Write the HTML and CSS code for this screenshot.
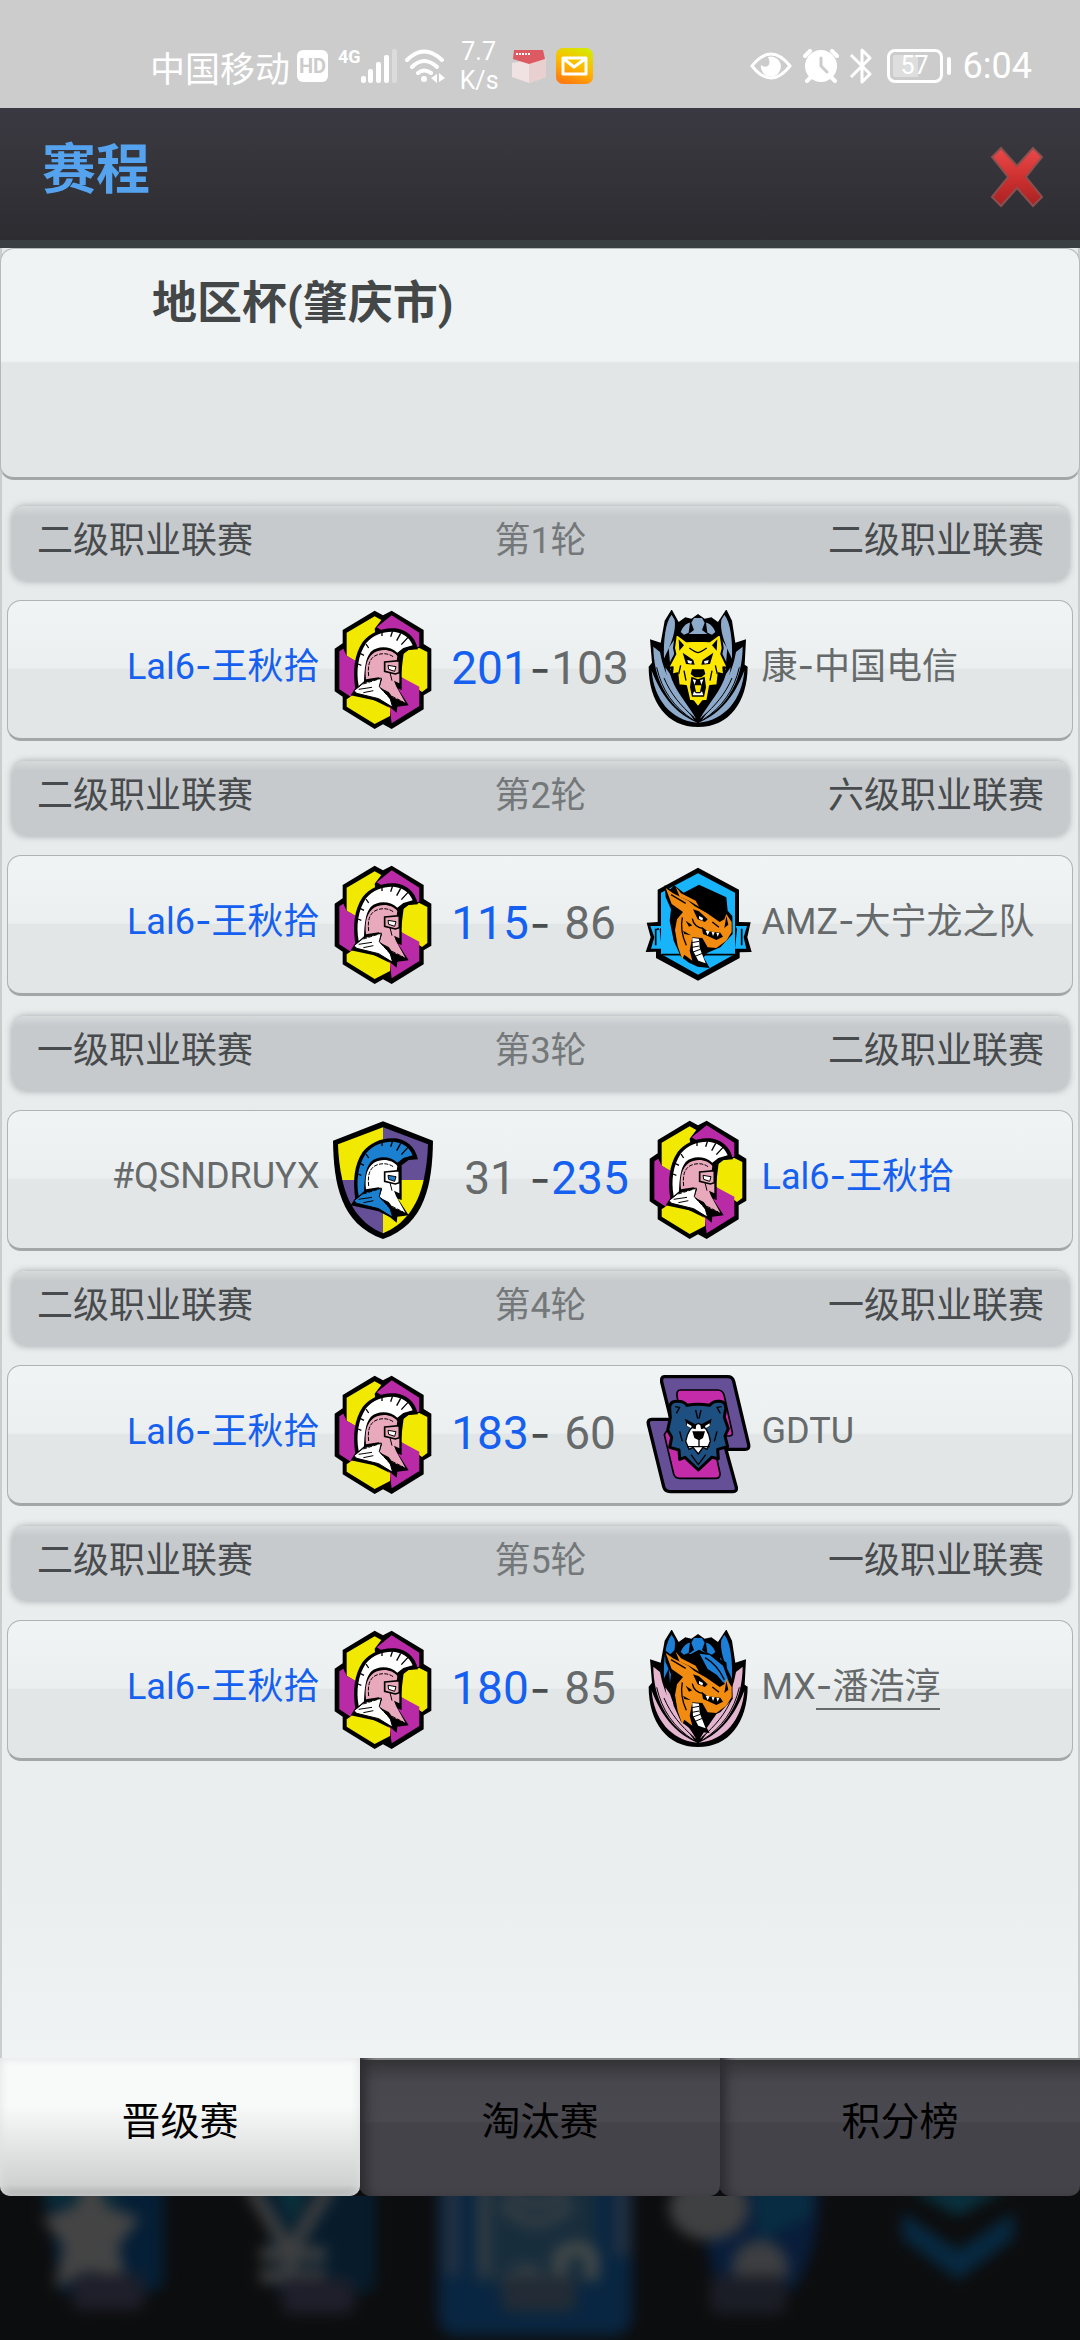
FILE: index.html
```html
<!DOCTYPE html>
<html lang="zh-CN">
<head>
  <meta charset="UTF-8">
  <meta name="viewport" content="width=device-width, initial-scale=1.0">
  <title>赛程</title>
  <link rel="stylesheet" href="styles.css">
</head>
<body>
  <!-- team logos, shared by the match rows -->
  <svg class="defs" aria-hidden="true">
    <symbol id="helmet" viewBox="0 0 324 360">
      <g transform="translate(-1 -24)">
        <path d="M80 262C72 205 76 160 102 120C124 92 160 76 200 79C232 84 258 100 268 142L240 144L219 160V264L208 260L240 310L206 314L204 332L184 316L150 298L66 280L82 256Z" fill="#000"/>
        <path class="crest" d="M90 252C82 205 88 160 112 124C134 98 164 88 194 89C218 92 242 102 252 130L224 138L206 152C184 132 148 130 126 150C110 170 108 200 106 238Z"/>
        <path d="M88 186l10 4M94 154l12 6M112 126l8 12M160 86v16M192 86l-6 18M216 94l-12 22M238 106l-20 22" stroke="#000" stroke-width="4" fill="none"/>
        <path class="mask" d="M112 232C108 192 116 166 136 152C162 138 192 144 206 162L204 176H212V244L196 236L202 252L230 302L192 286L180 270L152 256L160 232L150 226Z"/>
        <path class="mask" d="M168 180L212 176V212L200 216L168 208Z" stroke="#000" stroke-width="5"/>
        <path class="collar" d="M76 266L106 242L158 228L152 254L184 288L192 316L150 290L84 274Z" stroke="#000" stroke-width="3"/>
        <path d="M120 222C116 188 124 168 142 160C160 152 182 154 196 166M104 246l50-16M156 258l30 34M176 276l48 24" stroke="#000" stroke-width="3" fill="none" stroke-dasharray="12 4"/>
        <path d="M178 190l24 4-4 14-18-6z" stroke="#000" stroke-width="3" class="collar"/>
        <path d="M184 212l6 24M90 262l40-6M104 272l30-6" stroke="#000" stroke-width="3"/>
      </g>
    </symbol>

    <symbol id="wreath" viewBox="0 0 324 360">
      <g transform="translate(-970 -58)">
        <path d="M1053 56L1074 94L1094 80L1112 84L1132 70L1152 84L1172 80L1192 94L1217 56L1234 90L1244 156L1276 146L1272 222L1281 228C1280 335 1225 409 1132 409C1040 409 984 335 984 228L994 216L988 146L1020 156L1032 90Z" fill="#000"/>
        <g id="wing">
          <path class="plume" d="M1053 72C1034 95 1028 150 1030 204C1042 178 1068 130 1062 88Z"/>
          <path class="plume" d="M1080 124C1086 108 1096 98 1108 96L1104 126L1090 132Z"/>
          <path class="plume" d="M1044 172L1066 140L1058 210L1050 240Z"/>
          <path class="feather" d="M998 168C998 260 1040 345 1120 388C1075 325 1030 260 1018 184Z"/>
          <path class="feather" d="M993 240C1000 325 1050 388 1130 396C1060 366 1020 310 993 240Z"/>
          <path class="feather" d="M1034 230C1042 300 1080 350 1126 384C1098 335 1062 300 1048 250Z"/>
          <path d="M1008 230C1024 300 1060 350 1118 388M1030 262C1050 310 1080 345 1120 380" stroke="#000" stroke-width="3" fill="none"/>
        </g>
        <use href="#wing" transform="translate(2264 0) scale(-1 1)"/>
        <path class="plume" d="M1120 82H1144L1152 96L1144 118L1160 130H1104L1120 118L1112 96Z"/>
      </g>
    </symbol>

    <symbol id="wolf" viewBox="0 0 324 360">
      <g transform="translate(-970 -58)">
        <path d="M1066 128L1098 152L1132 150L1166 152L1199 128L1206 172L1202 190L1222 232L1208 230L1210 252L1194 248L1190 284L1168 286L1160 330L1146 332L1132 350L1118 332L1106 330L1096 286L1074 284L1070 248L1054 252L1056 230L1042 232L1064 190L1060 172Z" fill="#ffe800" stroke="#000" stroke-width="6" stroke-linejoin="round"/>
        <path d="M1074 146l16 18-14 16zM1190 146l-16 18 14 16zM1086 186l32 22 4 14-26-2zM1178 186l-32 22-4 14 26-2zM1114 236h36l4 14-12 10h-20l-12-10zM1112 258L1108 290L1114 318H1150L1156 290L1152 258L1132 266Z" fill="#000"/>
        <path d="M1100 208l14 4-2 7-10-2zM1164 208l-14 4 2 7 10-2zM1116 266l6 16 4-14zM1148 266l-6 16-4-14zM1116 314l4-12 6 6h12l6-6 4 12z" fill="#fff"/>
        <path d="M1122 284h20l-4 20h-12z" fill="#ffe800"/>
        <path d="M1106 172q16 12 26 14 10-2 26-14M1080 224l-6 26M1184 224l6 26M1090 240l6 30M1174 240l-6 30" stroke="#000" stroke-width="4" fill="none"/>
        <path d="M1120 340l12 40 12-40-12 12z" fill="#000"/>
      </g>
    </symbol>

    <symbol id="dragon" viewBox="0 0 324 360">
      <g transform="translate(-71 -43)">
        <path d="M133 103L150 116L162 104L190 126L236 102L318 140L322 180L336 196L337 250L300 290L262 306L250 320L268 352L232 348L206 336L182 318L160 270L148 210L152 176L136 140Z" fill="#000"/>
        <path class="hair" d="M238 114L268 118L308 150L330 210L308 200L290 178L262 160Z"/>
        <path d="M254 126q36 20 58 66" stroke="#000" stroke-width="4" fill="none"/>
        <path d="M136 112L158 128L204 150L222 166L258 186L298 214L312 206L318 190L334 214L334 244L318 270L288 292L262 290L246 262L216 260L208 300L216 330L192 312L186 326L172 286L164 238L170 206L188 184L154 160Z" fill="#f28c10"/>
        <path d="M166 108L182 128L226 150L236 168L206 150L178 138Z" fill="#f28c10"/>
        <path d="M218 176L236 182L262 206L254 214L232 206ZM244 228L262 242L300 246L308 258L288 268L262 256L248 250ZM196 210l20 14-10 4zM188 240l24 14-20-4zM318 196l6 26-12 10z" fill="#000"/>
        <path d="M152 132l44 26M186 200q-8 40 12 84M216 204q4 24 32 30M276 214l20 16" stroke="#000" stroke-width="4" fill="none"/>
        <path d="M236 196l12 6-2 8-10-6zM256 240l6 14 6-12zM274 244l4 12 5-11zM288 246l4 12 5-11zM216 262L236 264L238 292L256 338L234 330L218 300Z" fill="#fff"/>
        <path d="M214 276l22-4M215 290l22-4M218 304l22-8M222 318l24-10" stroke="#000" stroke-width="3"/>
      </g>
    </symbol>

    <symbol id="logo-hex" viewBox="0 0 324 360">
      <g transform="translate(-25 -58)">
        <path d="M162 60L187 74L213 60L309 118V160L332 174V300L309 314V356L213 415L187 401L162 415L66 356V318L42 302V174L66 158V118Z" fill="#000"/>
        <path d="M162 77L182 88L162 114L170 180L110 215L78 195V126Z" fill="#f2e900"/>
        <path d="M213 74L296 126V168L270 172L168 110Z" fill="#b92ba6"/>
        <path d="M56 182L68 174L78 195L112 215V300L96 322L56 296Z" fill="#b92ba6"/>
        <path d="M250 180L296 172L320 184V292L304 304L240 258Z" fill="#f2e900"/>
        <path d="M240 258L296 288V346L213 398L208 360L190 320Z" fill="#b92ba6"/>
        <path d="M78 326L110 304L208 352V376L162 400L78 348Z" fill="#f2e900"/>
      </g>
      <use href="#helmet"/>
    </symbol>

    <symbol id="logo-shield" viewBox="0 0 324 360">
      <path d="M162 4L312 62C310 190 290 312 162 357C34 312 14 190 12 62Z" fill="#000"/>
      <path d="M162 22V180H40C32 145 28 108 27 73Z" fill="#f2e900"/>
      <path d="M162 22L297 73C296 108 292 145 284 180H162Z" fill="#654f96"/>
      <path d="M40 180H162V340C100 314 58 262 40 180Z" fill="#654f96"/>
      <path d="M162 180H284C266 262 224 314 162 340Z" fill="#f2e900"/>
      <use href="#helmet"/>
    </symbol>

    <symbol id="logo-wolf" viewBox="0 0 324 360">
      <use href="#wreath"/>
      <use href="#wolf"/>
    </symbol>

    <symbol id="logo-ribbon" viewBox="0 0 324 360">
      <g transform="translate(-71 -43)">
        <path d="M233 51L356 117V214L391 215L381 260L394 304L358 305V322L233 390L107 322V303L76 304L91 260L79 216L112 214V117Z" fill="#000"/>
        <path d="M233 68L344 126V310L233 372L122 310V126Z" fill="#18b4fb"/>
        <path d="M90 226H126L118 236L124 294H92L102 260ZM380 226H346L350 236L344 294H378L370 260Z" fill="#18b4fb"/>
        <path d="M104 238l12-4M106 234v50M364 234v50M124 312h220" stroke="#000" stroke-width="5" fill="none"/>
      </g>
      <use href="#dragon"/>
    </symbol>

    <symbol id="logo-dragon" viewBox="0 0 324 360">
      <use href="#wreath"/>
      <use href="#dragon"/>
    </symbol>

    <symbol id="logo-bear" viewBox="0 0 324 360">
      <g transform="translate(-129 -71)" stroke="#000" stroke-linejoin="round">
        <path d="M190 76H380Q394 76 398 90L443 280Q446 294 432 294H232L182 92Q180 76 190 76Z" fill="#654f96" stroke-width="10"/>
        <path d="M238 116H350Q366 116 370 134L394 244Q396 254 384 254H250L228 134Q226 116 238 116Z" fill="#c32ba8" stroke-width="5"/>
        <path d="M152 204H350L406 408Q408 421 396 421H208Q192 421 188 406L142 218Q140 204 152 204Z" fill="#654f96" stroke-width="10"/>
        <path d="M196 240H330L357 366Q358 381 344 381H236Q222 381 218 368L190 250Z" fill="#c32ba8" stroke-width="5"/>
        <path d="M208 200L206 168Q208 148 230 150Q250 150 258 162Q290 156 326 162Q336 148 356 150Q376 152 374 172L370 198L382 232L372 254L380 286L350 294L352 322L332 318L292 356L252 318L236 324L234 296L206 288L212 258L200 236Z" fill="#1d4f80" stroke-width="9"/>
        <path d="M292 216Q322 226 328 270L318 294L306 288L292 308L276 288L264 294L254 270Q262 226 292 216Z" fill="#fff" stroke-width="4"/>
        <path d="M274 240h38l-6 20-10 6v18h30v4h-68v-4h34v-18l-12-6zM252 202l34 18-2 14-26-8zM332 202l-34 18 2 14 26-8z" fill="#000" stroke="none"/>
        <path d="M258 216l14 8-2 6-12-6zM326 216l-14 8 2 6 12-6z" fill="#fff" stroke="none"/>
        <path d="M222 166l14 2-10 18M362 166l-14 2 10 18M284 176l6 26M300 176l-6 26M236 240l8 30M348 240l-8 30M270 310l22 30 22-30" fill="none" stroke-width="4"/>
      </g>
    </symbol>
  </svg>

  <div class="status-bar">
    <div class="status-group">
      <span class="carrier">中国移动</span>
      <span class="hd">HD</span>
      <span class="net">4G</span>
      <svg class="signal" width="36" height="34" viewBox="0 0 36 34" fill="#fff">
        <rect x="0" y="27" width="5" height="7" rx="2"/>
        <rect x="7" y="20" width="5" height="14" rx="2"/>
        <rect x="15" y="13" width="5" height="21" rx="2"/>
        <rect x="23" y="6" width="5" height="28" rx="2"/>
        <rect x="31" y="0" width="5" height="34" rx="2" opacity=".3"/>
      </svg>
      <svg class="wifi" width="40" height="34" viewBox="0 0 40 34" fill="none" stroke="#fff" stroke-width="4" stroke-linecap="round">
        <path d="M2 11Q19-6 37 11M7 18Q19 6 32 18M13 24Q19 19 26 24"/>
        <circle cx="19" cy="30" r="3" fill="#fff" stroke="none"/>
        <path d="M32 25v9l-6-5zM34 24v9l6-4z" fill="#fff" stroke="none"/>
      </svg>
      <span class="speed">7.7<br>K/s</span>
      <svg class="box-icon" width="36" height="34" viewBox="0 0 36 34">
        <path d="M1 14L18 11L35 14V28L18 34L1 28Z" fill="#f0e2e3"/>
        <path d="M18 12L35 9V28L18 34Z" fill="#e8cfd0"/>
        <path d="M3 1H32L34 10L18 15L2 10Z" fill="#dd5a62"/>
        <path d="M5 5h14" stroke="#fff" stroke-width="2" stroke-dasharray="2 1"/>
      </svg>
      <svg width="37" height="36" viewBox="0 0 37 36">
        <defs>
          <linearGradient id="mail" x1=".7" y1="0" x2=".3" y2="1">
            <stop offset="0" stop-color="#d6e800"/>
            <stop offset=".5" stop-color="#ffb800"/>
            <stop offset="1" stop-color="#ff7a10"/>
          </linearGradient>
        </defs>
        <rect width="37" height="36" rx="7" fill="url(#mail)"/>
        <path d="M7 10H30V26H7ZM8 11L18 19L29 11" fill="none" stroke="#fff" stroke-width="3" stroke-linejoin="round"/>
      </svg>
    </div>
    <div class="status-group">
      <svg width="42" height="28" viewBox="0 0 42 28">
        <path d="M2 14Q21-10 40 14Q21 38 2 14Z" fill="none" stroke="#fff" stroke-width="3"/>
        <path d="M18 5A10 10 0 1 1 11 13Q14 16 18 14Q21 11 18 5Z" fill="#fff"/>
      </svg>
      <svg class="alarm" width="36" height="34" viewBox="0 0 36 34">
        <path d="M2 7L7 2M34 7L29 2M8 28L4 32M28 28L32 32" stroke="#fff" stroke-width="4" stroke-linecap="round"/>
        <circle cx="18" cy="17" r="16" fill="#fff"/>
        <path d="M18 9V17L24 23" fill="none" stroke="#ccc" stroke-width="3" stroke-linecap="round"/>
      </svg>
      <svg class="bluetooth" width="24" height="36" viewBox="0 0 24 36" fill="none" stroke="#fff" stroke-width="3" stroke-linejoin="round">
        <path d="M2 7L21 26L13 34V2L21 10L2 29"/>
      </svg>
      <span class="battery">57</span>
      <time class="clock">6:04</time>
    </div>
  </div>

  <header class="title-bar">
    <h1>赛程</h1>
    <button class="close" type="button" aria-label="关闭">
      <svg width="54" height="62" viewBox="0 0 54 62">
        <defs>
          <linearGradient id="red" x2="0" y2="1">
            <stop offset="0" stop-color="#ea4a4a"/>
            <stop offset=".5" stop-color="#cf3030"/>
            <stop offset="1" stop-color="#a82222"/>
          </linearGradient>
        </defs>
        <path d="M11 2L27 20L43 2L52 11L36 31L52 51L43 60L27 42L11 60L2 51L18 31L2 11Z" fill="url(#red)" stroke="#8a5050" stroke-width="2"/>
      </svg>
    </button>
  </header>

  <main>
    <section class="cup">
      <h2>地区杯(肇庆市)</h2>
    </section>

    <section class="round">
      <div class="round-head">
        <span>二级职业联赛</span>
        <span class="round-no">第1轮</span>
        <span>二级职业联赛</span>
      </div>
      <div class="match">
        <span class="team home mine">Lal6<span class="dash">-</span>王秋拾</span>
        <svg class="logo pink"><use href="#logo-hex"/></svg>
        <div class="score"><b class="mine">201</b><i>-</i><b>103</b></div>
        <svg class="logo steel"><use href="#logo-wolf"/></svg>
        <span class="team">康<span class="dash">-</span>中国电信</span>
      </div>
    </section>

    <section class="round">
      <div class="round-head">
        <span>二级职业联赛</span>
        <span class="round-no">第2轮</span>
        <span>六级职业联赛</span>
      </div>
      <div class="match">
        <span class="team home mine">Lal6<span class="dash">-</span>王秋拾</span>
        <svg class="logo pink"><use href="#logo-hex"/></svg>
        <div class="score"><b class="mine">115</b><i>-</i><b>86</b></div>
        <svg class="logo"><use href="#logo-ribbon"/></svg>
        <span class="team">AMZ<span class="dash">-</span>大宁龙之队</span>
      </div>
    </section>

    <section class="round">
      <div class="round-head">
        <span>一级职业联赛</span>
        <span class="round-no">第3轮</span>
        <span>二级职业联赛</span>
      </div>
      <div class="match">
        <span class="team home">#QSNDRUYX</span>
        <svg class="logo blue"><use href="#logo-shield"/></svg>
        <div class="score"><b>31</b><i>-</i><b class="mine">235</b></div>
        <svg class="logo pink"><use href="#logo-hex"/></svg>
        <span class="team mine">Lal6<span class="dash">-</span>王秋拾</span>
      </div>
    </section>

    <section class="round">
      <div class="round-head">
        <span>二级职业联赛</span>
        <span class="round-no">第4轮</span>
        <span>一级职业联赛</span>
      </div>
      <div class="match">
        <span class="team home mine">Lal6<span class="dash">-</span>王秋拾</span>
        <svg class="logo pink"><use href="#logo-hex"/></svg>
        <div class="score"><b class="mine">183</b><i>-</i><b>60</b></div>
        <svg class="logo"><use href="#logo-bear"/></svg>
        <span class="team">GDTU</span>
      </div>
    </section>

    <section class="round">
      <div class="round-head">
        <span>二级职业联赛</span>
        <span class="round-no">第5轮</span>
        <span>一级职业联赛</span>
      </div>
      <div class="match">
        <span class="team home mine">Lal6<span class="dash">-</span>王秋拾</span>
        <svg class="logo pink"><use href="#logo-hex"/></svg>
        <div class="score"><b class="mine">180</b><i>-</i><b>85</b></div>
        <svg class="logo rose"><use href="#logo-dragon"/></svg>
        <span class="team">MX<span class="marked"><span class="dash">-</span>潘浩淳</span></span>
      </div>
    </section>
  </main>

  <nav class="tabs">
    <button class="tab active" type="button">晋级赛</button>
    <button class="tab" type="button">淘汰赛</button>
    <button class="tab" type="button">积分榜</button>
  </nav>

  <!-- game menu behind the dialog -->
  <div class="game-menu" aria-hidden="true">
    <svg viewBox="0 0 216 144">
      <path d="M44-20H164V80Q164 96 148 96H60Z" fill="#06243f"/>
      <path d="M44-20H120V10H44Z" fill="#0b3242"/>
      <path d="M91-30L106 10L140 22L118 50L128 92L91 74L54 92L64 50L42 22L76 10Z" fill="#505050"/>
      <rect x="72" y="78" width="72" height="36" rx="8" fill="#232431"/>
    </svg>
    <svg viewBox="0 0 216 144">
      <path d="M44-20H160V80Q160 98 144 98H60Z" fill="#082033"/>
      <path d="M60-10H92L76 30Z" fill="#0d3a48"/>
      <path d="M34-10L74 56L114-10M74 50V90M44 58H110M44 80H110" stroke="#484a4b" stroke-width="14" fill="none"/>
      <rect x="66" y="82" width="72" height="36" rx="8" fill="#232431"/>
    </svg>
    <svg viewBox="0 0 216 144">
      <rect x="6" y="-40" width="194" height="180" rx="20" fill="#0a2c4c"/>
      <path d="M12-40H28V80H12ZM182-40H198V60H182Z" fill="#28394f"/>
      <rect x="44" y="-40" width="120" height="126" fill="#1c3547"/>
      <path d="M52-10V80M70 8Q104 44 140 8M74-6Q104 20 136-6M70 90Q96 60 110 84" stroke="#414b50" stroke-width="10" fill="none"/>
      <path d="M128 84V60Q146 44 160 60V84" stroke="#505656" stroke-width="14" fill="none"/>
      <rect x="70" y="80" width="74" height="36" rx="8" fill="#28333f"/>
    </svg>
    <svg viewBox="0 0 216 144">
      <path d="M40-20H170Q174 50 146 94H70Z" fill="#0a2244"/>
      <path d="M106-20H164V20L110 44Z" fill="#0a354e"/>
      <ellipse cx="61" cy="12" rx="40" ry="32" fill="#4a4b4c"/>
      <circle cx="112" cy="72" r="28" fill="#47494c"/>
      <rect x="62" y="80" width="76" height="38" rx="8" fill="#20222d"/>
    </svg>
    <svg viewBox="0 0 216 144">
      <path d="M44-8L94 20L144-8L94-8Z" fill="#0a3a4a"/>
      <path d="M38 16L94 54L150 16V42L94 84L38 42Z" fill="#08304c"/>
    </svg>
  </div>
</body>
</html>
```
FILE: styles.css
```css
* { box-sizing: border-box; }
body { display: flex; flex-direction: column; min-height: 100vh; margin: 0; background: #0c0d0e; color: #666a6b; font-family: Roboto, "Noto Sans CJK SC", sans-serif; font-size: 36px; }
h1, h2 { margin: 0; }
button { border: none; padding: 0; font-family: inherit; cursor: pointer; }
.defs { position: absolute; width: 0; height: 0; }

/* status bar */
.status-bar { display: flex; justify-content: space-between; height: 108px; padding: 24px 48px 0 150px; background: #ccc; color: #fff; }
.status-group { display: flex; align-items: center; }
.status-group > * { flex: none; }
.carrier { font-size: 35px; }
.hd { width: 31px; height: 32px; margin-left: 7px; border-radius: 6px; background: #fff; color: #ccc; font-size: 20px; font-weight: 700; line-height: 33px; text-align: center; }
.net { align-self: flex-start; margin: 22px 0 0 10px; font-size: 18px; font-weight: 700; line-height: 22px; }
.wifi { margin-left: 8px; }
.speed { width: 38px; margin-left: 15px; font-size: 25px; line-height: 29px; text-align: center; }
.box-icon { margin: 0 9px 0 13px; }
.alarm { margin: 0 10px 0 11px; }
.battery { position: relative; width: 56px; height: 34px; margin: 0 20px 0 14px; border: 3px solid #fff; border-radius: 8px; background: linear-gradient(90deg, #dedede 57%, transparent 57%) content-box; padding: 3px; font-size: 25px; line-height: 22px; text-align: center; }
.battery::after { content: ""; position: absolute; top: 5px; right: -11px; width: 4px; height: 18px; border-radius: 2px; background: #fff; }

/* dialog title */
.title-bar { display: flex; align-items: center; justify-content: space-between; height: 140px; padding: 0 36px 6px 42px; border-bottom: 8px solid #3a3f42; background: linear-gradient(#3a3943, #37363c 30%, #2d2c31); }
.title-bar h1 { color: #55a3ee; font-size: 54px; line-height: 80px; }
.close { height: 62px; margin-top: 12px; background: none; }
.close svg { display: block; }

main { flex: 1; padding-bottom: 24px; border: solid #c9cdce; border-width: 0 2px; background: linear-gradient(#e6eaeb, #eaeeef 90%, #f0f3f4); }
.cup { height: 232px; margin: 0 -2px 26px; padding: 25px 151px; border: 1px solid #b5b9ba; border-bottom: 3px solid #a3a7a8; border-radius: 14px; background: linear-gradient(#eff3f4 49%, #e2e6e7 50%); }
.cup h2 { color: #444748; font-size: 45px; line-height: 60px; }

/* rounds */
.round { margin: 0 5px 20px; }
.round-head { display: grid; grid-template-columns: 1fr auto 1fr; height: 75px; margin: 0 4px 19px 5px; padding: 0 25px; border-radius: 14px; background: linear-gradient(#d6dadb, #c6cacc 10px); box-shadow: 0 0 7px #a0a5a7; color: #484b4d; line-height: 70px; }
.round-head span:last-child { text-align: right; }
.round-head .round-no { color: #74787a; }
.match { display: grid; grid-template-columns: 1fr 108px 207px 108px 1fr; align-items: center; height: 141px; border: 1px solid #afb3b4; border-bottom: 3px solid #a3a7a8; border-radius: 14px; background: linear-gradient(#f0f4f5, #ebeff0 49%, #e2e6e7 50%); }
.team { padding: 0 9px 7px 10px; line-height: 52px; white-space: nowrap; }
.home { text-align: right; }
.dash { font-family: Inter, sans-serif; }
.marked { border-bottom: 2px solid #666a6b; }
.mine { color: #1560f0; }
.logo { width: 108px; height: 120px; }
.score { display: flex; justify-content: center; padding-bottom: 3px; font-size: 46px; line-height: 60px; }
.score b, .score i { font-weight: 400; font-style: normal; text-align: center; }
.score b { width: 78px; }
.score i { width: 22px; color: #4a4d4e; font-family: Inter, sans-serif; font-size: 46px; }

/* logo colours */
.pink { --crest: #fff; --mask: #e9a9bd; --collar: #fff; }
.blue { --crest: #1c80d0; --mask: #fff; --collar: #1c80d0; }
.steel { --plume: #8eaacb; --feather: #8eaacb; }
.rose { --plume: #1c80d8; --feather: #e3b5cf; --hair: #1c80d8; }
.crest { fill: var(--crest); }
.mask { fill: var(--mask); }
.collar { fill: var(--collar); }
.plume { fill: var(--plume); }
.feather { fill: var(--feather); }
.hair { fill: var(--hair, #000); }

/* tabs */
.tabs { display: flex; height: 138px; }
.tab { flex: 1; padding-bottom: 18px; border-radius: 0 0 10px 10px; background: linear-gradient(#333336, #48474d 24px, #4a494f 46%, #444349 47%); box-shadow: inset 12px 0 12px -6px #2c2b30, inset 0 2px #8d9091; color: #000; font-size: 39px; }
.tab.active { background: linear-gradient(#f8fafa 35%, #cfd1d1 92%, #a4a6a6); box-shadow: inset 0 0 10px #dfe1e1; }

.game-menu { display: flex; height: 144px; overflow: hidden; }
.game-menu svg { flex: 1; min-width: 0; filter: blur(7px) brightness(.85); overflow: visible; }
```
